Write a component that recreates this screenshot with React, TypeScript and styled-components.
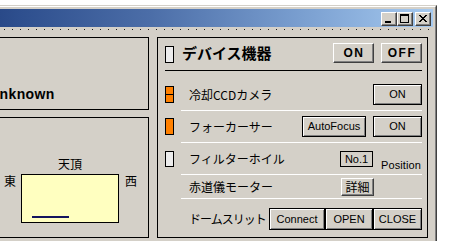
import React from 'react';
import styled, { createGlobalStyle, css } from 'styled-components';

const JP = `"Noto Sans CJK JP", "Liberation Sans", sans-serif`;

const GlobalStyle = createGlobalStyle`
  html, body {
    margin: 0;
    padding: 0;
    background: #fff;
    overflow: hidden;
  }
  body {
    font-family: "Liberation Sans", Arial, sans-serif;
    font-size: 12px;
    color: #000;
  }
`;

const Window = styled.div`
  margin: 5px 0 0 -40px;
  width: 477px;
  box-sizing: border-box;
  background: #d4d0c8;
  border-top: 1px solid #d4d0c8;
  border-left: 1px solid #d4d0c8;
  border-right: 1px solid #404040;
`;

const WindowInner = styled.div`
  border-top: 1px solid #fff;
  border-left: 1px solid #fff;
  border-right: 1px solid #808080;
  padding: 2px 2px 12px 2px;
`;

const TitleBar = styled.div`
  height: 18px;
  box-sizing: border-box;
  padding: 3px 2px 0 0;
  display: flex;
  justify-content: flex-end;
  align-items: flex-start;
  background: linear-gradient(90deg, #22407e 0%, #2e4f8e 12%, #4c6ea8 40%, #7a9fd0 72%, #a6caf0 100%);
`;

const CaptionGroup = styled.div`
  display: flex;
  margin-right: 2px;
`;

const CaptionButton = styled.div`
  width: 16px;
  height: 14px;
  box-sizing: border-box;
  background: #d4d0c8;
  border-top: 1px solid #fff;
  border-left: 1px solid #fff;
  border-right: 1px solid #404040;
  border-bottom: 1px solid #404040;
  box-shadow: inset -1px -1px #808080;

  svg {
    display: block;
  }
`;

const MenuDots = styled.div`
  height: 1px;
  margin-top: 2px;
  background: repeating-linear-gradient(90deg, #1a1a1a 0 1px, transparent 1px 8px);
`;

const Panels = styled.div`
  display: flex;
  gap: 8px;
  margin-top: 7px;
  padding: 0 5px 0 6px;
`;

const LeftColumn = styled.div`
  width: 179px;
  display: flex;
  flex-direction: column;
  gap: 7px;
`;

const Panel = styled.div<{ $h: number }>`
  height: ${p => p.$h}px;
  box-sizing: border-box;
  border: 1px solid #000;
`;

const StatusPanel = styled(Panel)`
  display: flex;
  align-items: flex-end;
  padding: 0 0 7px 18px;
`;

const StatusText = styled.div`
  font-size: 14px;
  font-weight: bold;
  line-height: 16px;
  letter-spacing: 0.4px;
  white-space: nowrap;
`;

const SkyPanel = styled(Panel)`
  padding: 39px 0 0 33px;
`;

const Compass = styled.div`
  display: grid;
  grid-template-columns: 12px 98px 13px;
  grid-template-areas:
    ". zenith ."
    "east sky west";
  column-gap: 5px;
  row-gap: 3px;
  align-items: start;
  font-family: ${JP};
  font-size: 12px;
  line-height: 14px;
`;

const Zenith = styled.div`
  grid-area: zenith;
  text-align: center;
`;

const Side = styled.div<{ $area: 'east' | 'west' }>`
  grid-area: ${p => p.$area};
  text-align: ${p => (p.$area === 'west' ? 'right' : 'left')};
`;

const SkyBox = styled.div`
  grid-area: sky;
  height: 49px;
  box-sizing: border-box;
  border: 1px solid #000;
  background: #ffffc0;
  display: flex;
  align-items: flex-end;
  padding: 0 0 4px 10px;
`;

const Horizon = styled.div`
  width: 37px;
  height: 2px;
  background: #14145e;
`;

const DevicePanel = styled(Panel)`
  width: 271px;
  padding: 0 5px 0 7px;
`;

const Header = styled.div`
  display: flex;
  align-items: center;
  padding: 5px 0 7px;
  border-bottom: 1px solid #000;
`;

const Title = styled.div`
  flex: 1;
  margin-left: 8px;
  font-family: ${JP};
  font-size: 15px;
  font-weight: bold;
  line-height: 20px;
  white-space: nowrap;
`;

const Row = styled.div<{ $pt: number; $pb: number; $last?: boolean }>`
  display: flex;
  align-items: center;
  padding: ${p => p.$pt}px 0 ${p => p.$pb}px;
  ${p =>
    !p.$last &&
    css`
      background: linear-gradient(#fff, #fff) right bottom / calc(100% - 16px) 1px no-repeat;
    `}
`;

const Slot = styled.div`
  width: 16px;
  flex: none;
  display: flex;
  align-items: center;
`;

const Lamp = styled.div<{ $kind: 'on' | 'off' | 'split'; $h?: number }>`
  width: 9px;
  height: ${p => p.$h ?? 17}px;
  flex: none;
  box-sizing: border-box;
  border: 1px solid #000;
  align-self: ${p => (p.$kind === 'off' && !p.$h ? 'flex-end' : 'auto')};
  background: ${p =>
    p.$kind === 'on'
      ? '#ff8000'
      : p.$kind === 'split'
      ? 'linear-gradient(#ff8000 0 7px, #000 7px 8px, #ff8000 8px)'
      : '#ececec'};
`;

const Label = styled.div<{ $tight?: boolean }>`
  flex: 1 1 0;
  min-width: 0;
  margin-left: 8px;
  font-family: ${JP};
  font-size: 12px;
  line-height: 16px;
  white-space: nowrap;
  letter-spacing: ${p => (p.$tight ? '-1px' : '0')};
`;

const Btn = styled.button<{ $w: number; $h: number; $framed?: boolean; $bold?: boolean }>`
  width: ${p => p.$w}px;
  height: ${p => p.$h}px;
  flex: none;
  box-sizing: border-box;
  margin: 0;
  padding: 0;
  background: #d4d0c8;
  color: #000;
  font-family: "Liberation Sans", Arial, sans-serif;
  font-size: 11px;
  line-height: 1;
  white-space: nowrap;
  ${p =>
    p.$framed
      ? css`
          border: 1px solid #000;
          box-shadow: inset 1px 1px #fff, inset -1px -1px #808080;
        `
      : css`
          border-top: 1px solid #fff;
          border-left: 1px solid #fff;
          border-right: 1px solid #404040;
          border-bottom: 1px solid #404040;
          box-shadow: inset -1px -1px #808080;
        `}
  ${p =>
    p.$bold &&
    css`
      font-size: 12px;
      font-weight: bold;
      letter-spacing: 1.5px;
      padding-left: 1px;
    `}
`;

const KanjiBtn = styled(Btn)`
  font-family: ${JP};
  font-size: 12px;
`;

const ButtonGroup = styled.div<{ $gap: number; $right?: number }>`
  display: flex;
  flex: none;
  gap: ${p => p.$gap}px;
  margin-right: ${p => p.$right ?? 0}px;
`;

const SlotBox = styled.div`
  width: 33px;
  height: 16px;
  flex: none;
  box-sizing: border-box;
  border: 1px solid #000;
  display: flex;
  align-items: center;
  justify-content: center;
  font-size: 11px;
`;

const PositionText = styled.div`
  width: 41px;
  flex: none;
  margin-left: 8px;
  align-self: flex-end;
  margin-bottom: -6px;
  font-size: 11px;
  line-height: 16px;
  letter-spacing: 0.1px;
`;

const MinimizeIcon = () => (
  <svg width="14" height="12" shapeRendering="crispEdges">
    <rect x="3" y="8" width="6" height="2" fill="#000" />
  </svg>
);

const MaximizeIcon = () => (
  <svg width="14" height="12" shapeRendering="crispEdges">
    <rect x="2" y="1" width="9" height="9" fill="#000" />
    <rect x="3" y="3" width="7" height="6" fill="#d4d0c8" />
  </svg>
);

const CloseIcon = () => (
  <svg width="14" height="12" shapeRendering="crispEdges">
    {[0, 1, 2, 3, 4, 5, 6].map(i => (
      <React.Fragment key={i}>
        <rect x={3 + i} y={2 + i} width="2" height="1" fill="#000" />
        <rect x={9 - i} y={2 + i} width="2" height="1" fill="#000" />
      </React.Fragment>
    ))}
  </svg>
);

export default function App() {
  return (
    <>
      <GlobalStyle />
      <Window>
        <WindowInner>
          <TitleBar>
            <CaptionGroup>
              <CaptionButton><MinimizeIcon /></CaptionButton>
              <CaptionButton><MaximizeIcon /></CaptionButton>
            </CaptionGroup>
            <CaptionButton><CloseIcon /></CaptionButton>
          </TitleBar>
          <MenuDots />
          <Panels>
            <LeftColumn>
              <StatusPanel $h={73}>
                <StatusText>Unknown</StatusText>
              </StatusPanel>
              <SkyPanel $h={121}>
                <Compass>
                  <Zenith>天頂</Zenith>
                  <Side $area="east">東</Side>
                  <SkyBox>
                    <Horizon />
                  </SkyBox>
                  <Side $area="west">西</Side>
                </Compass>
              </SkyPanel>
            </LeftColumn>

            <DevicePanel $h={201}>
              <Header>
                <Lamp $kind="off" />
                <Title>デバイス機器</Title>
                <ButtonGroup $gap={7}>
                  <Btn $w={41} $h={20} $bold>ON</Btn>
                  <Btn $w={41} $h={20} $bold>OFF</Btn>
                </ButtonGroup>
              </Header>

              <Row $pt={13} $pb={6}>
                <Slot><Lamp $kind="split" /></Slot>
                <Label>冷却CCDカメラ</Label>
                <Btn $w={49} $h={21} $framed>ON</Btn>
              </Row>

              <Row $pt={5} $pb={6}>
                <Slot><Lamp $kind="on" /></Slot>
                <Label>フォーカーサー</Label>
                <ButtonGroup $gap={7}>
                  <Btn $w={64} $h={21} $framed>AutoFocus</Btn>
                  <Btn $w={49} $h={21} $framed>ON</Btn>
                </ButtonGroup>
              </Row>

              <Row $pt={8} $pb={8}>
                <Slot><Lamp $kind="off" $h={16} /></Slot>
                <Label>フィルターホイル</Label>
                <SlotBox>No.1</SlotBox>
                <PositionText>Position</PositionText>
              </Row>

              <Row $pt={3} $pb={3}>
                <Slot />
                <Label>赤道儀モーター</Label>
                <ButtonGroup $gap={0} $right={48}>
                  <KanjiBtn $w={33} $h={18}>詳細</KanjiBtn>
                </ButtonGroup>
              </Row>

              <Row $pt={9} $pb={7} $last>
                <Slot />
                <Label $tight>ドームスリット</Label>
                <ButtonGroup $gap={0}>
                  <Btn $w={56} $h={22} $framed>Connect</Btn>
                  <Btn $w={48} $h={22} $framed>OPEN</Btn>
                  <Btn $w={49} $h={22} $framed>CLOSE</Btn>
                </ButtonGroup>
              </Row>
            </DevicePanel>
          </Panels>
        </WindowInner>
      </Window>
    </>
  );
}
